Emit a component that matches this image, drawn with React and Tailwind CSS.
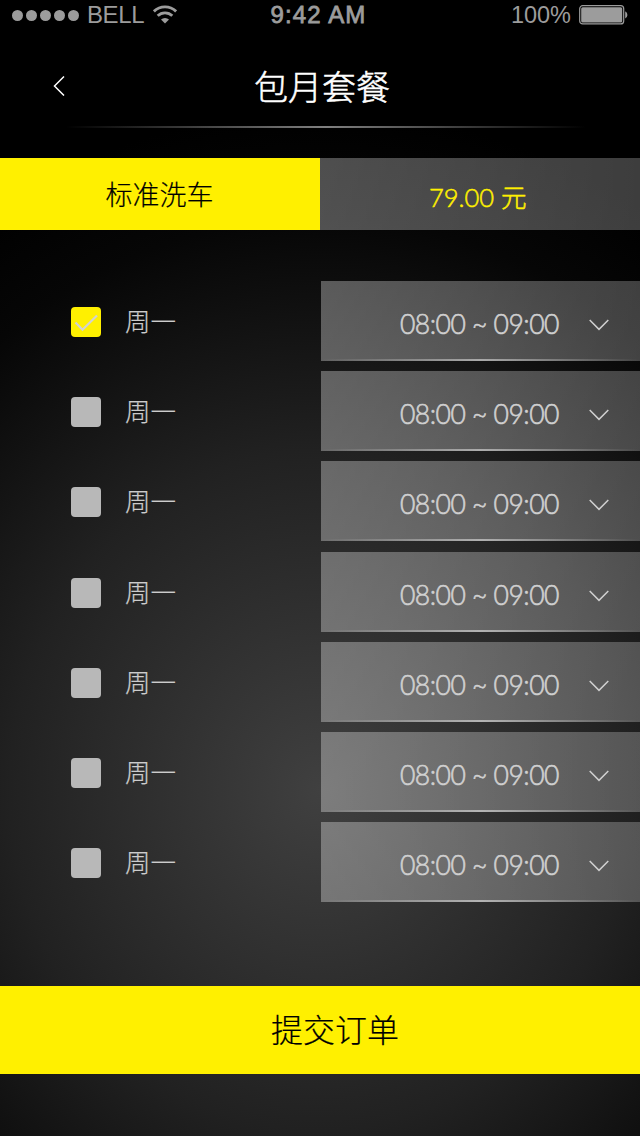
import React, { useState } from 'react';

const initialSlots = [
    { id: 1, day: '周一', time: '08:00 ~ 09:00', checked: true },
    { id: 2, day: '周一', time: '08:00 ~ 09:00', checked: false },
    { id: 3, day: '周一', time: '08:00 ~ 09:00', checked: false },
    { id: 4, day: '周一', time: '08:00 ~ 09:00', checked: false },
    { id: 5, day: '周一', time: '08:00 ~ 09:00', checked: false },
    { id: 6, day: '周一', time: '08:00 ~ 09:00', checked: false },
    { id: 7, day: '周一', time: '08:00 ~ 09:00', checked: false },
];

const StatusBar = () => (
    <div className="grid grid-cols-3 items-center h-[30px] pl-3 pr-[11px] text-[#9c9c9c] font-['Liberation_Sans',sans-serif] text-2xl leading-[30px]">
        <div className="flex items-center">
            <div className="flex gap-[3px]">
                {[0, 1, 2, 3, 4].map(i => (
                    <span key={i} className="w-[11px] h-[11px] rounded-full bg-[#9c9c9c]" />
                ))}
            </div>
            <span className="ml-2 text-[24px] tracking-[-0.4px]">BELL</span>
            <svg className="ml-[9px] -mt-0.5 w-6 h-[19px]" viewBox="0 0 24 19" fill="none" stroke="currentColor" strokeWidth="2.8">
                <path d="M0.9 6.4a15.8 15.8 0 0 1 22.2 0" />
                <path d="M4.7 10.8a10.4 10.4 0 0 1 14.6 0" />
                <path d="M8 14.6a5.6 5.6 0 0 1 8 0L12 18.6z" fill="currentColor" stroke="none" />
            </svg>
        </div>
        <span className="text-center text-[24px] tracking-[1.1px] pr-1 whitespace-nowrap [-webkit-text-stroke:0.8px_currentColor]">9:42 AM</span>
        <div className="flex items-center justify-end">
            <span className="text-[23.5px]">100%</span>
            <svg className="ml-2 w-[50px] h-5" viewBox="0 0 50 20">
                <rect x="0.7" y="0.7" width="44" height="18.2" rx="3" fill="none" stroke="currentColor" strokeWidth="1.2" />
                <rect x="2.2" y="2.2" width="41" height="15.2" rx="1.5" fill="currentColor" />
                <path d="M46.2 6.2a4.2 4.2 0 0 1 0 7.4z" fill="currentColor" />
            </svg>
        </div>
    </div>
);

const SlotRow = ({ slot, onToggle }) => (
    <div className="flex h-20 nth-[4]:mt-px">
        <div className="w-[321px] flex pl-[71px] pt-[26px]">
            <button
                onClick={onToggle}
                className={`w-[30px] h-[30px] rounded ${slot.checked ? 'bg-[#fff000]' : 'bg-[#b8b8b8]'}`}
            >
                {slot.checked && (
                    <svg className="w-[30px] h-[30px]" viewBox="0 0 30 30" fill="none" stroke="#d2d2d2" strokeWidth="2.2">
                        <path d="M4.5 15.5l7 7.2L26 8.5" />
                    </svg>
                )}
            </button>
            <span className="ml-6 -mt-0.5 text-[25.5px] leading-[30px] font-light text-[#ccc] [-webkit-text-stroke:0.2px_currentColor]">{slot.day}</span>
        </div>
        <div className="flex-1 flex flex-col bg-linear-to-r from-white/32 to-white/24">
            <div className="flex-1 flex items-center pl-[79px] pt-[9px] text-[#d0d0d0]">
                <span className="w-[160px] -mt-0.5 whitespace-nowrap font-['Lato',sans-serif] font-light text-[26.5px] leading-8 tracking-[-0.5px] [-webkit-text-stroke:0.6px_currentColor]">{slot.time}</span>
                <svg className="ml-[29px] w-5 h-3" viewBox="0 0 20 12" fill="none" stroke="currentColor" strokeWidth="1.5">
                    <path d="M0.7 1L10 10.4L19.3 1" />
                </svg>
            </div>
            <div className="h-0.5 bg-linear-to-r from-transparent via-white/50 to-transparent" />
        </div>
    </div>
);

export default function App() {
    const [slots, setSlots] = useState(initialSlots);

    const toggleSlot = (id) => {
        setSlots(slots.map(s => (s.id === id ? { ...s, checked: !s.checked } : s)));
    };

    return (
        <div className="w-[640px] h-[1136px] flex flex-col overflow-hidden bg-black bg-[radial-gradient(ellipse_620px_680px_at_320px_790px,#404040,#212121_50%,#060606_84%,#000)] font-['Noto_Sans_CJK_SC',sans-serif]">
            <StatusBar />

            {/* Title bar */}
            <header className="h-[96px] grid grid-cols-[1fr_auto_1fr] items-center pt-[15px] pl-[53px] pr-[49px] bg-black">
                <button className="w-3">
                    <svg className="w-3 h-5" viewBox="0 0 12 20" fill="none" stroke="#fff" strokeWidth="1.5">
                        <path d="M11 0.5L1.5 10L11 19.5" />
                    </svg>
                </button>
                <h1 className="text-[34px] leading-10 font-light text-white [-webkit-text-stroke:0.5px_currentColor]">包月套餐</h1>
            </header>
            <div className="h-0.5 ml-[66px] mr-[54px] bg-linear-to-r from-transparent via-[#808080] to-transparent" />

            {/* Package and price */}
            <div className="flex h-[72px] mt-[30px] shrink-0">
                <div className="w-1/2 bg-[#fff000] text-black text-[27px] font-light leading-[72px] text-center pr-px [-webkit-text-stroke:0.2px_currentColor]">标准洗车</div>
                <div className="w-1/2 bg-linear-to-r from-white/30 to-white/24 text-[#fff000] font-['Lato','Noto_Sans_CJK_SC',sans-serif] font-light text-[25.5px] leading-[78px] h-[72px] pl-[109px] [-webkit-text-stroke:0.5px_currentColor]">79.00 元</div>
            </div>

            {/* Time slots */}
            <div className="flex flex-col gap-2.5 mt-[51px]">
                {slots.map(slot => (
                    <SlotRow key={slot.id} slot={slot} onToggle={() => toggleSlot(slot.id)} />
                ))}
            </div>

            <button className="h-[88px] mt-[84px] shrink-0 pl-[30px] pb-1 bg-[#fff000] text-black text-[32px] font-light [-webkit-text-stroke:0.2px_currentColor]">提交订单</button>
        </div>
    );
}
